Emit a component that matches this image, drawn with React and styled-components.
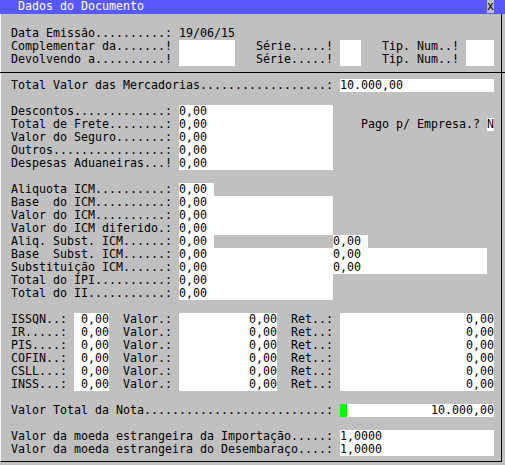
import React from "react"
import styled, { createGlobalStyle } from "styled-components"

const CELL = 7
const ROW = 13

const lead = (text, width, mark = ":") =>
    text + ".".repeat(width - text.length - 2) + mark + " "

const GlobalStyle = createGlobalStyle`
    html, body {
        margin: 0;
        padding: 0;
        background: #c0c0c0;
    }
    body {
        font-family: "DejaVu Sans Mono", "Liberation Mono", monospace;
        font-size: 11.63px;
        color: #000;
    }
`

const Screen = styled.div`
    width: 505px;
    height: 465px;
    background: #c0c0c0;
`

const TitleBar = styled.div`
    display: flex;
    justify-content: space-between;
    height: 14px;
    line-height: 13px;
    padding: 0 11px 0 18px;
    background: #5858ff;
    color: #fff;
    white-space: pre;
`

const CloseBox = styled.span`
    width: ${CELL}px;
    height: 13px;
    background: #c0c0c0;
    color: #000;
`

const Body = styled.div`
    width: 502px;
    height: 448px;
    box-sizing: border-box;
    padding-left: 10px;
    border-left: 1px solid #f4f4f4;
    border-right: 1px solid #000;
    border-bottom: 1px solid #000;
`

const Line = styled.div`
    display: flex;
    height: ${ROW}px;
    line-height: ${ROW}px;
    white-space: pre;
`

const Rule = styled.div`
    width: 505px;
    height: 6px;
    margin: 0 0 6px -11px;
    border-bottom: 1px solid #000;
`

const Cell = styled.span`
    flex: none;
    width: ${p => p.$cols * CELL}px;
    height: ${ROW}px;
    overflow: hidden;
    text-align: ${p => (p.$right ? "right" : "left")};
`

const Input = styled(Cell)`
    background: #fff;
`

const Cursor = styled(Cell)`
    background: #00ff00;
`

const Blank = () => <Line />

const Amount = ({ label, mark }) => (
    <Line>
        <Cell $cols={24}>{lead(label, 24, mark)}</Cell>
        <Input $cols={22}>0,00</Input>
    </Line>
)

const taxes = ["ISSQN", "IR", "PIS", "COFIN", "CSLL", "INSS"]

const App = () => {
    return (
        <Screen>
            <GlobalStyle />
            <TitleBar>
                <span>Dados do Documento</span>
                <CloseBox>x</CloseBox>
            </TitleBar>
            <Body>
                <Blank />
                <Line>
                    <Cell $cols={24}>{lead("Data Emissão", 24)}</Cell>
                    <Cell $cols={8}>19/06/15</Cell>
                </Line>
                {["Complementar da", "Devolvendo a"].map(label => (
                    <Line key={label}>
                        <Cell $cols={24}>{lead(label, 24, "!")}</Cell>
                        <Input $cols={8} />
                        <Cell $cols={3} />
                        <Cell $cols={12}>{lead("Série", 12, "!")}</Cell>
                        <Input $cols={3} />
                        <Cell $cols={3} />
                        <Cell $cols={12}>{lead("Tip. Num", 12, "!")}</Cell>
                        <Input $cols={4} />
                    </Line>
                ))}
                <Rule />
                <Line>
                    <Cell $cols={47}>{lead("Total Valor das Mercadorias", 47)}</Cell>
                    <Input $cols={22}>10.000,00</Input>
                </Line>
                <Blank />

                <Amount label="Descontos" />
                <Line>
                    <Cell $cols={24}>{lead("Total de Frete", 24)}</Cell>
                    <Input $cols={22}>0,00</Input>
                    <Cell $cols={4} />
                    <Cell $cols={18}>{lead("Pago p/ Empresa", 18, "?")}</Cell>
                    <Input $cols={1}>N</Input>
                </Line>
                <Amount label="Valor do Seguro" />
                <Amount label="Outros" />
                <Amount label="Despesas Aduaneiras" mark="!" />
                <Blank />

                <Line>
                    <Cell $cols={24}>{lead("Aliquota ICM", 24)}</Cell>
                    <Input $cols={5}>0,00</Input>
                </Line>
                <Amount label="Base  do ICM" />
                <Amount label="Valor do ICM" />
                <Amount label="Valor do ICM diferido" />
                <Line>
                    <Cell $cols={24}>{lead("Aliq. Subst. ICM", 24)}</Cell>
                    <Input $cols={5}>0,00</Input>
                    <Cell $cols={17} />
                    <Input $cols={5}>0,00</Input>
                </Line>
                {["Base  Subst. ICM", "Substituição ICM"].map(label => (
                    <Line key={label}>
                        <Cell $cols={24}>{lead(label, 24)}</Cell>
                        <Input $cols={22}>0,00</Input>
                        <Input $cols={22}>0,00</Input>
                    </Line>
                ))}
                <Amount label="Total do IPI" />
                <Amount label="Total do II" />
                <Blank />

                {taxes.map(tax => (
                    <Line key={tax}>
                        <Cell $cols={9}>{lead(tax, 9)}</Cell>
                        <Input $cols={5} $right>0,00</Input>
                        <Cell $cols={2} />
                        <Cell $cols={8}>{lead("Valor", 8)}</Cell>
                        <Input $cols={14} $right>0,00</Input>
                        <Cell $cols={2} />
                        <Cell $cols={7}>{lead("Ret", 7)}</Cell>
                        <Input $cols={22} $right>0,00</Input>
                    </Line>
                ))}
                <Blank />

                <Line>
                    <Cell $cols={47}>{lead("Valor Total da Nota", 47)}</Cell>
                    <Cursor $cols={1} />
                    <Input $cols={21} $right>10.000,00</Input>
                </Line>
                <Blank />
                <Line>
                    <Cell $cols={47}>{lead("Valor da moeda estrangeira da Importação", 47)}</Cell>
                    <Input $cols={22}>1,0000</Input>
                </Line>
                <Line>
                    <Cell $cols={47}>{lead("Valor da moeda estrangeira do Desembaraço", 47)}</Cell>
                    <Input $cols={22}>1,0000</Input>
                </Line>
            </Body>
        </Screen>
    )
}

export default App
